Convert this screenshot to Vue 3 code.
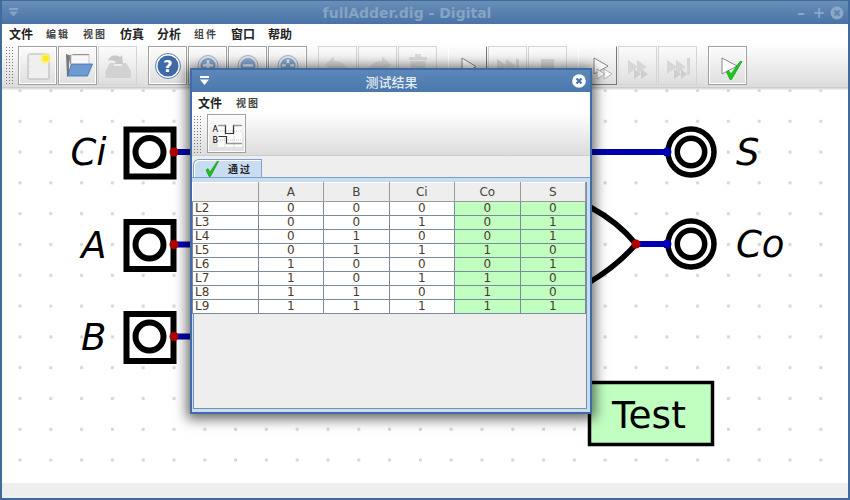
<template>
  <div class="app-window">
    <div class="title-bar">
      <svg class="win-menu" width="12" height="12" viewBox="0 0 12 12">
        <path d="M1 1h9v2H1zM1 4.5h9L5.5 9.5z" fill="#86a4c4" />
      </svg>
      <span class="win-title">fullAdder.dig - Digital</span>
      <div class="win-buttons">
        <span class="wb">–</span>
        <span class="wb">+</span>
        <svg width="14" height="14" viewBox="0 0 14 14">
          <circle cx="7" cy="7" r="6.5" fill="#8aa8c8" />
          <path d="M4.5 4.5l5 5M9.5 4.5l-5 5" stroke="#5f85ae" stroke-width="2" />
        </svg>
      </div>
    </div>

    <div class="menu-bar">
      <span v-for="m in mainMenu" :key="m.t" :class="{ thin: m.thin }">{{ m.t }}</span>
    </div>

    <div class="toolbar">
      <div class="grip"></div>
      <div class="tool-group" v-for="(group, gi) in tools" :key="gi">
        <button v-for="b in group" :key="b.id" class="tool" :class="b.cls">
          <svg width="36" height="36" viewBox="0 0 36 36" v-html="icons[b.id]"></svg>
        </button>
      </div>
    </div>

    <div class="canvas">
      <svg width="846" height="395" viewBox="2 88 846 395">
        <defs>
          <pattern id="dots" x="18.5" y="89" width="30.8" height="30.8" patternUnits="userSpaceOnUse">
            <rect width="3" height="3" fill="#d8d8d8" />
          </pattern>
        </defs>
        <rect x="2" y="88" width="846" height="395" fill="#fff" />
        <rect x="2" y="88" width="846" height="395" fill="url(#dots)" />
        <rect x="2" y="88" width="846" height="1.5" fill="#ddd" />

        <g v-for="p in inputs" :key="p.label">
          <path :d="`M174 ${p.y}H192`" stroke="#0000b2" stroke-width="6" />
          <rect x="126.5" :y="p.y - 22.5" width="47" height="47" fill="#fff" stroke="#000" stroke-width="6" />
          <circle cx="149.5" :cy="p.y" r="14" fill="none" stroke="#000" stroke-width="6" />
          <circle cx="174" :cy="p.y" r="4.5" fill="#b20000" />
          <text class="pin-label" x="106.5" :y="p.y + 13" text-anchor="end">{{ p.label }}</text>
        </g>

        <path d="M590 152H667M636 244H667" stroke="#0000b2" stroke-width="6" />
        <path d="M590 207Q618 222 636 244Q618 265 590 282" fill="none" stroke="#000" stroke-width="5.5" />
        <circle cx="636" cy="244" r="4.5" fill="#b20000" />

        <g v-for="p in outputs" :key="p.label">
          <circle cx="691" :cy="p.y" r="23" fill="#fff" stroke="#000" stroke-width="5.5" />
          <circle cx="691" :cy="p.y" r="13.7" fill="#fff" stroke="#000" stroke-width="5.5" />
          <circle cx="667" :cy="p.y" r="4.5" fill="#0000b2" />
          <text class="pin-label" x="736" :y="p.y + 13">{{ p.label }}</text>
        </g>

        <rect x="589.5" y="382.5" width="123" height="62" fill="#c0ffc0" stroke="#000" stroke-width="3.5" />
        <text class="test-label" x="612" y="428">Test</text>
      </svg>
    </div>

    <div class="status-bar"></div>

    <div class="dialog">
      <div class="dlg-title">
        <svg class="dlg-menu" width="12" height="12" viewBox="0 0 12 12">
          <path d="M1 1h9v2H1zM1 4.5h9L5.5 10z" fill="#fff" />
        </svg>
        <span class="dlg-name">测试结果</span>
        <svg class="dlg-close" width="14" height="14" viewBox="0 0 14 14">
          <circle cx="7" cy="7" r="6.8" fill="#fff" />
          <path d="M4.5 4.5l5 5M9.5 4.5l-5 5" stroke="#4a76a8" stroke-width="2.2" />
        </svg>
      </div>

      <div class="dlg-menubar">
        <span>文件</span>
        <span class="thin">视图</span>
      </div>

      <div class="dlg-toolbar">
        <div class="grip small"></div>
        <button class="tool on">
          <svg width="36" height="36" viewBox="0 0 36 36">
            <rect x="9" y="8" width="24" height="23" fill="#fbfbfb" />
            <path d="M9 15H33M9 24H33M16 8V31M25 8V31" stroke="#c8c8c8" stroke-width="1" stroke-dasharray="1 1" fill="none" />
            <path d="M9.5 9.5H16.5V17.5H24.5V9.5H32.5" stroke="#333" stroke-width="1.2" fill="none" />
            <path d="M9.5 20.5H17.5V27.5H32.5" stroke="#333" stroke-width="1.2" fill="none" />
            <path d="M9.5 9.5H16.5M24.5 9.5H32.5M17.5 27.5H32.5" stroke="#999" stroke-width="1.6" fill="none" />
            <text class="wave-label" x="3.5" y="15.5">A</text>
            <text class="wave-label" x="3.5" y="26.5">B</text>
          </svg>
        </button>
      </div>

      <div class="tab-strip">
        <div class="tab">
          <svg class="check" width="14" height="16" viewBox="0 0 14 16">
            <path d="M1 9l2-1.5 2 3.5L12 .5h1.5L5.5 15.5H4z" fill="#16c416" stroke="#0a8a0a" stroke-width="0.5" />
          </svg>
          <span>通过</span>
        </div>
      </div>

      <div class="tab-body">
        <div class="table-panel">
          <table class="results">
            <thead>
              <tr>
                <th></th>
                <th v-for="h in headers" :key="h">{{ h }}</th>
              </tr>
            </thead>
            <tbody>
              <tr v-for="r in rows" :key="r.name">
                <td class="line">{{ r.name }}</td>
                <td v-for="(v, i) in r.vals" :key="i" :class="{ ok: i > 2 }">{{ v }}</td>
              </tr>
            </tbody>
          </table>
        </div>
      </div>
    </div>
  </div>
</template>

<script setup>
const mainMenu = [
  { t: '文件' },
  { t: '编辑', thin: true },
  { t: '视图', thin: true },
  { t: '仿真' },
  { t: '分析' },
  { t: '组件', thin: true },
  { t: '窗口' },
  { t: '帮助' }
]

const tools = [
  [{ id: 'new', cls: 'on' }, { id: 'open', cls: 'on' }, { id: 'save', cls: 'off' }],
  [{ id: 'help', cls: 'on' }, { id: 'zoomIn', cls: 'on' }, { id: 'zoomOut', cls: 'on' }, { id: 'fit', cls: 'on' }],
  [{ id: 'undo', cls: 'off' }, { id: 'redo', cls: 'off' }, { id: 'del', cls: 'off' }],
  [{ id: 'play', cls: 'raised' }, { id: 'step', cls: 'off' }, { id: 'stop', cls: 'off' }],
  [{ id: 'micro', cls: 'raised' }, { id: 'fast', cls: 'off' }, { id: 'fastEnd', cls: 'off' }],
  [{ id: 'test', cls: 'on' }]
]

const lens = inner => `
  <circle cx="18" cy="17.5" r="10" fill="#dfe6ee" stroke="#a8b2c0" stroke-width="1"/>
  <circle cx="18" cy="17.5" r="7.5" fill="#88a8d0"/>
  ${inner}`

const icons = {
  new: `<rect x="8" y="6" width="21" height="25" rx="1.5" fill="#efefef" stroke="#b4b4b4" stroke-width="1"/>
    <path d="M10 11v17" stroke="#d0d0d0" stroke-dasharray="1 6"/>
    <circle cx="25.5" cy="10.5" r="5.5" fill="#fff27a" opacity=".7"/><circle cx="25.5" cy="10.5" r="3" fill="#ffe81a"/>`,
  open: `<path d="M6 6l3 1v20l-2 2z" fill="#777"/><path d="M8 7h4l1-1h16v10H10z" fill="#8a8a8a"/>
    <rect x="11" y="7" width="18" height="11" fill="#f6f6f6" stroke="#aaa" stroke-width=".6"/>
    <path d="M11.5 16H32.5L27.5 28H7.5z" fill="#6d9ad2" stroke="#3e6ea8" stroke-width=".8"/>`,
  save: `<path d="M10 15h4v3h8v-3h4l5 8v7H5.5v-7z" fill="#d2d2d2"/>
    <path d="M8 13c1-5 7-7 12-4l2-2 1 9h-9l2-2c-3-2-6-2-8-1z" fill="#c8c8c8"/>`,
  help: `<circle cx="18" cy="18" r="12.5" fill="#fff" stroke="#5b7ea8" stroke-width="1"/><circle cx="18" cy="18" r="10.5" fill="#3f6aa6"/>
    <text x="18" y="24" text-anchor="middle" font-family="DejaVu Sans" font-weight="700" font-size="16" fill="#fff">?</text>`,
  zoomIn: lens('<path d="M13 17.5h10M18 12.5v10" stroke="#e8eef6" stroke-width="2.5"/>'),
  zoomOut: lens('<path d="M13 17.5h10" stroke="#e8eef6" stroke-width="2.5"/>'),
  fit: lens('<path d="M12 17.5h12M18 11.5v12" stroke="#e8eef6" stroke-width="2.5"/><circle cx="18" cy="17.5" r="2.5" fill="#88a8d0"/>'),
  undo: '<path d="M5 17l9-9v5c8 0 14 4 15 14-3-5-8-6-15-6v5z" fill="#dcdcdc"/>',
  redo: '<path d="M31 17l-9-9v5c-8 0-14 4-15 14 3-5 8-6 15-6v5z" fill="#dcdcdc"/>',
  del: '<path d="M10 13h16l-2 17H12zM9 9h18v3H9zM15 6h6v3h-6z" fill="#dcdcdc"/>',
  play: '<path d="M12 10L26 18.5L12 27z" fill="#fff" stroke="#888" stroke-width="1"/>',
  step: '<path d="M7 11l10 7-10 7zM16 11l10 7-10 7z" fill="#d6d6d6"/><rect x="26" y="11" width="3" height="14" fill="#d6d6d6"/>',
  stop: '<rect x="11" y="11" width="13" height="13" fill="#d6d6d6"/>',
  micro: '<path d="M14 10L28 18L14 26z" fill="#fff" stroke="#888"/><path d="M17 21l8 5-8 5zM24 21l8 5-8 5z" fill="#fff" stroke="#aaa" stroke-width=".8"/>',
  fast: '<path d="M8 12l10 7-10 7zM17 12l10 7-10 7z" fill="#d6d6d6"/><path d="M14 21l7 5-7 5zM21 21l7 5-7 5z" fill="#cecece"/>',
  fastEnd: '<path d="M7 12l10 7-10 7zM16 12l10 7-10 7z" fill="#d6d6d6"/><rect x="27" y="10" width="3" height="17" fill="#d6d6d6"/><path d="M14 21l7 5-7 5zM21 21l6 5-6 5z" fill="#cecece"/>',
  test: `<path d="M12 10l15 8-15 8z" fill="#fff" stroke="#888"/><path d="M16.5 24l2-1.5 2.5 3.5L30 13.5h2L21.5 31.5H20z" fill="#16d016" stroke="#0a8a0a" stroke-width=".6"/>`
}

const inputs = [
  { label: 'Ci', y: 152 },
  { label: 'A', y: 244.5 },
  { label: 'B', y: 336.5 }
]
const outputs = [
  { label: 'S', y: 152 },
  { label: 'Co', y: 244 }
]

const headers = ['A', 'B', 'Ci', 'Co', 'S']
const rows = [
  { name: 'L2', vals: [0, 0, 0, 0, 0] },
  { name: 'L3', vals: [0, 0, 1, 0, 1] },
  { name: 'L4', vals: [0, 1, 0, 0, 1] },
  { name: 'L5', vals: [0, 1, 1, 1, 0] },
  { name: 'L6', vals: [1, 0, 0, 0, 1] },
  { name: 'L7', vals: [1, 0, 1, 1, 0] },
  { name: 'L8', vals: [1, 1, 0, 1, 0] },
  { name: 'L9', vals: [1, 1, 1, 1, 1] }
]
</script>

<style scoped>
.app-window {
  position: relative;
  width: 850px;
  height: 500px;
  box-sizing: border-box;
  border: 2px solid #3f6c9c;
  border-top: 1px solid #3f6c9c;
  display: flex;
  flex-direction: column;
  overflow: hidden;
  font-family: "DejaVu Sans", "Noto Sans CJK SC", sans-serif;
  background: #eee;
}

.title-bar {
  height: 23px;
  flex: none;
  margin: 0 -2px;
  padding: 0 6px 0 8px;
  display: flex;
  align-items: center;
  background: linear-gradient(#6a8fb8, #4873a6);
}
.win-title {
  flex: 1;
  text-align: center;
  font-size: 14px;
  font-weight: 700;
  color: #86a4c4;
}
.win-buttons {
  display: flex;
  align-items: center;
  gap: 4px;
}
.wb {
  width: 14px;
  text-align: center;
  font-size: 15px;
  font-weight: 700;
  line-height: 14px;
  color: #8aa8c8;
}

.menu-bar {
  height: 19px;
  flex: none;
  padding: 0 0 0 7px;
  display: flex;
  align-items: center;
  gap: 13px;
  background: #fff;
  font-size: 12px;
  font-weight: 700;
  color: #222;
}
.thin {
  font-weight: 700;
  color: #444;
  font-size: 10px;
  letter-spacing: 2px;
}

.toolbar {
  height: 45px;
  flex: none;
  box-sizing: border-box;
  padding: 3px 0 0 3px;
  display: flex;
  background: linear-gradient(#fff, #dcdcdc);
  border-bottom: 1px solid #ccc;
}
.grip {
  width: 10px;
  height: 40px;
  margin-right: 3px;
  background-image: radial-gradient(#777 0.8px, transparent 1px);
  background-size: 3px 3px;
}
.grip.small {
  height: 38px;
  margin: 1px 4px 0 0;
}
.tool-group {
  display: flex;
  gap: 1px;
  margin-right: 11px;
}
.tool {
  width: 39px;
  height: 39px;
  padding: 0;
  background: none;
  border: 1px solid transparent;
  display: flex;
  align-items: center;
  justify-content: center;
}
.tool.on {
  border-color: #a0a0a0;
  box-shadow: inset 0 0 0 1px #fff;
}
.tool.off {
  border-color: #d4d4d4;
}
.tool.raised {
  border-color: #fff #777 #777 #fff;
}

.canvas {
  flex: 1;
  min-height: 0;
  background: #fff;
}
.canvas svg {
  display: block;
}
.pin-label {
  font-family: "DejaVu Sans", sans-serif;
  font-style: oblique;
  font-size: 37px;
}
.test-label {
  font-family: "DejaVu Sans", sans-serif;
  font-size: 37.5px;
}
.wave-label {
  font-family: "DejaVu Sans", sans-serif;
  font-size: 8px;
}

.status-bar {
  height: 15px;
  flex: none;
  background: #eee;
}

.dialog {
  position: absolute;
  left: 188px;
  top: 67px;
  width: 402px;
  height: 346px;
  box-sizing: border-box;
  border: 2px solid #3f6ca4;
  display: flex;
  flex-direction: column;
  background: #eee;
  box-shadow: 0 2px 12px 3px rgba(0, 0, 0, 0.6);
}
.dlg-title {
  height: 22px;
  flex: none;
  padding: 0 4px 0 7px;
  display: flex;
  align-items: center;
  background: linear-gradient(#5d87b8, #4a78ae);
}
.dlg-name {
  flex: 1;
  text-align: center;
  font-size: 13px;
  font-weight: 500;
  color: #fff;
  opacity: 0.85;
}
.dlg-menubar {
  height: 20px;
  flex: none;
  display: flex;
  align-items: center;
  gap: 14px;
  padding-left: 6px;
  background: #fff;
  font-size: 12px;
  font-weight: 700;
  color: #222;
}
.dlg-toolbar {
  height: 44px;
  flex: none;
  box-sizing: border-box;
  padding: 2px 0 0 1px;
  display: flex;
  background: linear-gradient(#fff, #dcdcdc);
  border-bottom: 1px solid #ccc;
}
.tab-strip {
  height: 22px;
  flex: none;
  padding: 3px 0 0 1px;
  box-sizing: border-box;
  display: flex;
  background: #eee;
  border-bottom: 1px solid #7f9fcb;
}
.tab {
  width: 69px;
  display: flex;
  align-items: center;
  gap: 9px;
  padding-left: 11px;
  box-sizing: border-box;
  background: #c8dcf2;
  border: 1px solid #7f9fcb;
  border-bottom: none;
  border-top-left-radius: 6px;
  box-shadow: inset 1px 1px 0 #fff;
  font-size: 10px;
  font-weight: 700;
  letter-spacing: 2px;
  color: #222;
}
.tab-body {
  flex: 1;
  min-height: 0;
  display: flex;
  padding: 4px 3px 3px 1px;
  background: #c8dcf2;
}
.table-panel {
  flex: 1;
  box-sizing: border-box;
  background: #eee;
  border: 1px solid #7d8ea8;
  border-top: none;
}

.results {
  width: 394px;
  margin-left: -2px;
  border-collapse: collapse;
  table-layout: fixed;
  font-size: 12px;
  color: #4a3a2a;
}
.results th {
  height: 18px;
  padding: 0;
  font-weight: 400;
  background: #eee;
  border: 1px solid #9a9a9a;
  border-top-color: #fff;
  border-left-color: #fff;
  color: #444;
}
.results td {
  height: 13px;
  padding: 0;
  line-height: 13px;
  text-align: center;
  background: #fff;
  border: 1px solid #7d8a9c;
}
.results td.line {
  text-align: left;
  padding-left: 2px;
}
.results td.ok {
  background: #c0ffc0;
}
</style>

<style>
html, body {
  margin: 0;
  background: #fff;
}
</style>
